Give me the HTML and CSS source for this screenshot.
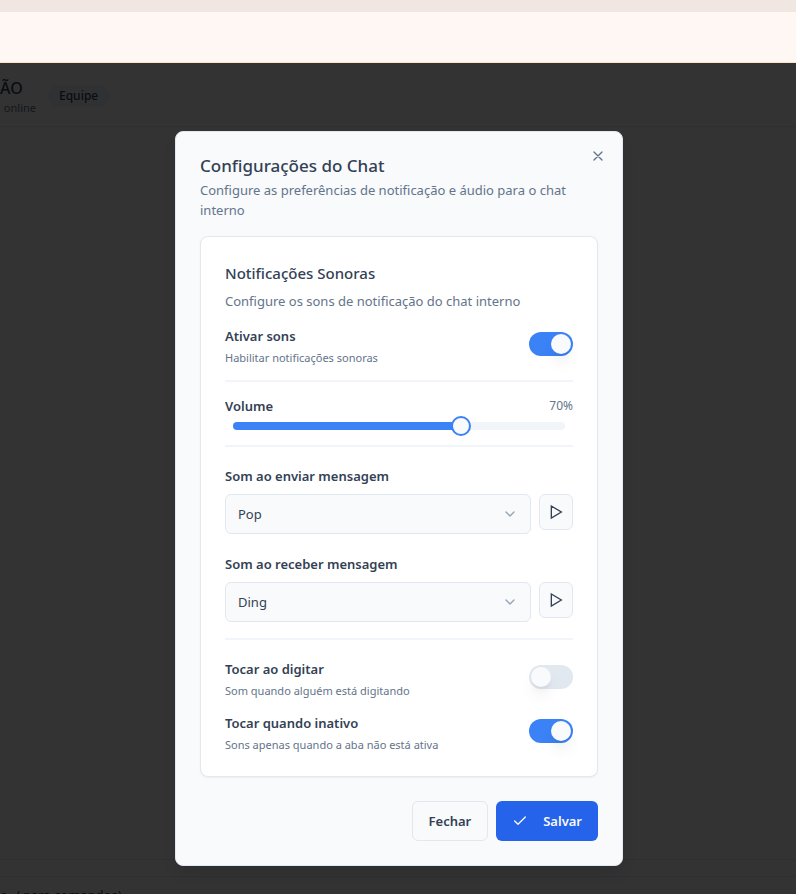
FILE: index.html
```html
<!DOCTYPE html>
<html lang="pt-BR">
<head>
<meta charset="utf-8">
<meta name="viewport" content="width=device-width, initial-scale=1">
<title>Configurações do Chat</title>
<link rel="stylesheet" href="styles.css">
</head>
<body>
<div class="strip"></div>
<div class="banner"></div>
<div class="stage">
  <div class="chat">
    <header class="chat-header">
      <div class="chat-id">
        <strong class="chat-name">ÃO</strong>
        <span class="chat-status">online</span>
      </div>
      <span class="badge">Equipe</span>
    </header>
    <div class="messages"></div>
    <div class="typing"></div>
    <footer class="composer">o, / para comandos)</footer>
  </div>
  <div class="overlay">
    <form class="dialog" role="dialog" aria-labelledby="dialog-title" aria-describedby="dialog-desc">
      <button class="close" type="button" aria-label="Fechar janela">
        <svg width="16" height="16" viewBox="0 0 24 24" fill="none" stroke="currentColor" stroke-width="2" stroke-linecap="round" stroke-linejoin="round"><path d="M18 6 6 18M6 6l12 12"/></svg>
      </button>
      <header class="dialog-header">
        <h1 id="dialog-title">Configurações do Chat</h1>
        <p id="dialog-desc">Configure as preferências de notificação e áudio para o chat interno</p>
      </header>
      <section class="card">
        <h2>Notificações Sonoras</h2>
        <p class="card-desc">Configure os sons de notificação do chat interno</p>
        <div class="toggle-row">
          <div>
            <label class="toggle-label" for="sounds">Ativar sons</label>
            <p class="hint">Habilitar notificações sonoras</p>
          </div>
          <input class="switch" type="checkbox" role="switch" id="sounds" checked>
        </div>
        <hr>
        <div class="volume">
          <div class="volume-head">
            <label for="volume">Volume</label>
            <output for="volume">70%</output>
          </div>
          <input class="slider" type="range" id="volume" min="0" max="100" value="70" style="--value: 0.7">
        </div>
        <hr>
        <div class="sounds">
          <div class="field">
            <label for="send">Som ao enviar mensagem</label>
            <div class="field-row">
              <div class="select">
                <select id="send"><option>Pop</option><option>Ding</option></select>
                <svg width="16" height="16" viewBox="0 0 24 24" fill="none" stroke="currentColor" stroke-width="2" stroke-linecap="round" stroke-linejoin="round"><path d="m6 9 6 6 6-6"/></svg>
              </div>
              <button class="play" type="button" aria-label="Ouvir som de envio">
                <svg width="16" height="16" viewBox="0 0 24 24" fill="none" stroke="currentColor" stroke-width="2" stroke-linejoin="miter"><path d="M5 3l15 9-15 9z"/></svg>
              </button>
            </div>
          </div>
          <div class="field">
            <label for="receive">Som ao receber mensagem</label>
            <div class="field-row">
              <div class="select">
                <select id="receive"><option>Ding</option><option>Pop</option></select>
                <svg width="16" height="16" viewBox="0 0 24 24" fill="none" stroke="currentColor" stroke-width="2" stroke-linecap="round" stroke-linejoin="round"><path d="m6 9 6 6 6-6"/></svg>
              </div>
              <button class="play" type="button" aria-label="Ouvir som de recebimento">
                <svg width="16" height="16" viewBox="0 0 24 24" fill="none" stroke="currentColor" stroke-width="2" stroke-linejoin="miter"><path d="M5 3l15 9-15 9z"/></svg>
              </button>
            </div>
          </div>
        </div>
        <hr>
        <div class="toggles">
          <div class="toggle-row">
            <div>
              <label class="toggle-label" for="typing">Tocar ao digitar</label>
              <p class="hint">Som quando alguém está digitando</p>
            </div>
            <input class="switch" type="checkbox" role="switch" id="typing">
          </div>
          <div class="toggle-row">
            <div>
              <label class="toggle-label" for="idle">Tocar quando inativo</label>
              <p class="hint">Sons apenas quando a aba não está ativa</p>
            </div>
            <input class="switch" type="checkbox" role="switch" id="idle" checked>
          </div>
        </div>
      </section>
      <footer class="actions">
        <button class="btn" type="button">Fechar</button>
        <button class="btn primary" type="submit">
          <svg width="16" height="16" viewBox="0 0 24 24" fill="none" stroke="currentColor" stroke-width="2" stroke-linecap="round" stroke-linejoin="round"><path d="M20 6 9 17l-5-5"/></svg>
          Salvar
        </button>
      </footer>
    </form>
  </div>
</div>
</body>
</html>
```
FILE: styles.css
```css
:root {
  --ink: #334155;
  --muted: #64748b;
  --line: #e2e8f0;
  --soft: #f1f5f9;
  --surface: #f8fafc;
  --blue: #3b82f6;
}

* { box-sizing: border-box; }

body {
  margin: 0;
  height: 100vh;
  overflow: hidden;
  display: flex;
  flex-direction: column;
  font: 13px/20px "Noto Sans", "Open Sans", sans-serif;
  color: var(--ink);
}

h1, h2, p { margin: 0; }
button, input, select { font: inherit; color: inherit; margin: 0; }
svg { display: block; }

.strip { flex: none; height: 12px; background: #f0e7e2; }
.banner { flex: none; height: 51px; background: #fff7f3; border-bottom: 1px solid #fde3c8; }

/* The chat and its overlay share one grid cell. */
.stage { flex: 1; min-height: 0; display: grid; grid-template: minmax(0, 1fr) / minmax(0, 1fr); }
.chat, .overlay { grid-area: 1 / 1; }

.chat { display: flex; flex-direction: column; background: #fff; }
.chat-header {
  display: flex;
  align-items: center;
  gap: 12px;
  height: 64px;
  padding-top: 2px;
  border-bottom: 1px solid var(--line);
}
.chat-id { display: flex; flex-direction: column; align-items: flex-end; width: 36px; }
.chat-name { font-size: 16px; font-weight: 500; line-height: 24px; align-self: flex-start; }
.chat-status { font-size: 11px; line-height: 16px; color: var(--muted); }
.badge {
  padding: 0 11px;
  border-radius: 12px;
  background: var(--soft);
  font-size: 12px;
  font-weight: 500;
  line-height: 22px;
}
.messages { flex: 1; }
.typing { height: 18px; border: solid var(--line); border-width: 1px 0; }
.composer { height: 17px; padding-top: 8px; overflow: hidden; white-space: nowrap; }

.overlay {
  z-index: 1;
  display: flex;
  justify-content: center;
  align-items: flex-start;
  padding: 68px 16px 0 18px;
  background: rgba(0, 0, 0, 0.8);
}

.dialog {
  position: relative;
  width: 100%;
  max-width: 448px;
  padding: 24px;
  border: 1px solid var(--line);
  border-radius: 8px;
  background: var(--surface);
  box-shadow: 0 10px 15px -3px rgba(0, 0, 0, 0.1);
}
.close {
  position: absolute;
  top: 16px;
  right: 16px;
  padding: 0;
  border: 0;
  background: none;
  color: var(--muted);
}
.dialog-header { display: grid; gap: 4px; margin-bottom: 16px; color: var(--muted); }
.dialog-header h1 { font-size: 17px; font-weight: 500; line-height: 20px; color: var(--ink); }

.card {
  padding: 24px 24px 23px;
  border: 1px solid var(--line);
  border-radius: 8px;
  background: #fff;
  box-shadow: 0 1px 2px rgba(0, 0, 0, 0.05);
}
.card h2 { font-size: 15px; font-weight: 500; line-height: 24px; }
.card-desc { margin: 6px 0 11px; color: var(--muted); }
.card label { font-weight: 600; }
.card hr { height: 2px; margin: 0; border: 0; background: var(--soft); }

.toggle-row { display: flex; align-items: center; justify-content: space-between; }
.card .toggle-label { display: block; line-height: 28px; }
.hint { font-size: 11px; line-height: 16px; color: var(--muted); }
.toggle-row + hr { margin-top: 14px; }
.toggles { display: grid; gap: 10px; padding-top: 15px; }

.switch {
  appearance: none;
  flex: none;
  width: 44px;
  height: 24px;
  padding: 2px;
  border-radius: 12px;
  background: var(--line);
}
.switch::before {
  content: "";
  display: block;
  width: 20px;
  height: 20px;
  border-radius: 50%;
  background: var(--surface);
  box-shadow: 0 10px 15px -3px rgba(0, 0, 0, 0.1), 0 4px 6px -4px rgba(0, 0, 0, 0.1);
}
.switch:checked { background: var(--blue); }
.switch:checked::before { margin-left: auto; }

.volume { padding: 14px 0 9px; }
.volume-head { display: flex; justify-content: space-between; }
.volume-head output { font-size: 12px; color: var(--muted); }
.slider {
  appearance: none;
  display: block;
  width: calc(100% - 16px);
  height: 20px;
  margin: 0 8px;
  background: none;
}
.slider::-webkit-slider-runnable-track {
  height: 8px;
  border-radius: 4px;
  background: linear-gradient(to right, var(--blue) calc(10px + (100% - 20px) * var(--value)), var(--soft) 0);
}
.slider::-webkit-slider-thumb {
  appearance: none;
  width: 20px;
  height: 20px;
  margin-top: -6px;
  border: 2px solid var(--blue);
  border-radius: 50%;
  background: var(--surface);
}

.sounds { display: grid; gap: 20px; padding: 19px 0 16px; }
.field { display: grid; gap: 8px; }
.field-row { display: flex; gap: 8px; align-items: flex-start; }
.select { position: relative; flex: 1; }
.select select {
  appearance: none;
  display: block;
  width: 100%;
  height: 40px;
  padding: 0 12px;
  border: 1px solid var(--line);
  border-radius: 6px;
  background: var(--surface);
}
.select svg {
  position: absolute;
  top: 12px;
  right: 13px;
  color: #94a3b8;
  pointer-events: none;
}
.play {
  display: grid;
  place-items: center;
  width: 34px;
  height: 36px;
  padding: 0;
  border: 1px solid var(--line);
  border-radius: 6px;
  background: var(--surface);
}

.actions { display: flex; justify-content: flex-end; gap: 8px; margin-top: 24px; }
.btn {
  display: flex;
  align-items: center;
  gap: 15px;
  height: 40px;
  padding: 0 16px;
  border: 1px solid var(--line);
  border-radius: 6px;
  background: var(--surface);
  font-weight: 600;
}
.primary { border: 0; background: #2563eb; color: var(--surface); }
```
